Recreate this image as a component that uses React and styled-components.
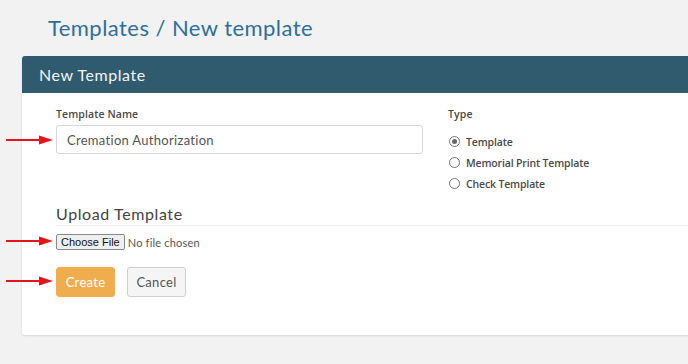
import styled, { createGlobalStyle } from 'styled-components';

const Global = createGlobalStyle`
  html, body {
    margin: 0;
    padding: 0;
    background: #f2f2f2;
    font-family: "Lato", "Noto Sans", sans-serif;
    overflow: hidden;
  }
`;

const Page = styled.div`
  position: relative;
  width: 688px;
  height: 364px;
  padding-left: 22px;
  box-sizing: border-box;
`;

const Title = styled.h1`
  margin: 0;
  padding: 14px 0 0 26px;
  height: 56px;
  box-sizing: border-box;
  font-size: 22px;
  font-weight: 400;
  color: #2f6f9b;
  letter-spacing: 0.45px;
`;

const Card = styled.div`
  background: #fff;
  border-radius: 3px 0 0 3px;
  box-shadow: 0 1px 2px rgba(0, 0, 0, 0.12);
  height: 279px;
  width: 680px;
`;

const CardHeader = styled.div`
  background: #305b6f;
  color: #f2f5f7;
  height: 37px;
  border-radius: 3px 0 0 0;
  padding-left: 17px;
  display: flex;
  align-items: center;
  font-size: 16px;
  letter-spacing: 0.55px;
`;

const Body = styled.div`
  padding: 14px 0 0 34px;
`;

const Row = styled.div`
  display: flex;
`;

const NameCol = styled.div`
  width: 367px;
  margin-right: 25px;
`;

const Label = styled.div`
  font-family: "Open Sans", "Lato", sans-serif;
  font-size: 10.5px;
  font-weight: 600;
  color: #4a4a4a;
  height: 18px;
  letter-spacing: 0.1px;
`;

const TextInput = styled.input`
  box-sizing: border-box;
  width: 367px;
  height: 29px;
  border: 1px solid #d6d6d6;
  border-radius: 3px;
  padding: 0 10px;
  font-family: inherit;
  font-size: 13px;
  color: #555;
  letter-spacing: 0.3px;
  outline: none;
`;

const RadioList = styled.div`
  display: flex;
  flex-direction: column;
  gap: 4px;
  margin-top: 8px;
`;

const RadioRow = styled.label`
  display: flex;
  align-items: center;
  height: 17px;
  font-family: "Open Sans", "Lato", sans-serif;
  font-size: 10.5px;
  font-weight: 600;
  color: #4a4a4a;
  letter-spacing: -0.15px;
`;

const Dot = styled.span`
  width: 9px;
  height: 9px;
  border-radius: 50%;
  border: 1px solid #777;
  margin: 0 6px 0 1px;
  display: inline-flex;
  align-items: center;
  justify-content: center;
  &::after {
    content: '';
    width: 5px;
    height: 5px;
    border-radius: 50%;
    background: ${(p) => (p.checked ? '#666' : 'transparent')};
  }
`;

const Section = styled.div`
  margin-top: 12px;
  font-size: 16px;
  color: #444;
  padding-bottom: 2px;
  border-bottom: 1px solid #eee;
  letter-spacing: 0.6px;
`;

const FileRow = styled.div`
  display: flex;
  align-items: center;
  margin-top: 8px;
  height: 16px;
`;

const FileButton = styled.span`
  box-sizing: border-box;
  height: 16px;
  padding: 0 4px;
  display: inline-flex;
  align-items: center;
  border: 1px solid #8a8a8a;
  border-radius: 2px;
  background: #efefef;
  font-family: "Liberation Sans", Arial, sans-serif;
  font-size: 11px;
  color: #111;
`;

const FileText = styled.span`
  margin-left: 3px;
  font-size: 11px;
  color: #555;
  letter-spacing: 0.2px;
`;

const Buttons = styled.div`
  display: flex;
  gap: 12px;
  margin-top: 17px;
`;

const Button = styled.button`
  height: 30px;
  width: 59px;
  border-radius: 3px;
  font-family: inherit;
  font-size: 13px;
  letter-spacing: 0.3px;
  border: 1px solid ${(p) => (p.primary ? '#f0ad4e' : '#cfcfcf')};
  background: ${(p) => (p.primary ? '#f0ad4e' : '#f5f5f5')};
  color: ${(p) => (p.primary ? '#fff' : '#555')};
  padding: 0;
`;

const Arrow = styled.svg`
  position: absolute;
  left: 5px;
  width: 50px;
  height: 10px;
`;

function RedArrow({ top }) {
  return (
    <Arrow style={{ top }} viewBox="0 0 50 10">
      <line x1="1" y1="5" x2="36" y2="5" stroke="#e8141b" strokeWidth="2.2" />
      <polygon points="34,0.5 48,5 34,9.5" fill="#e8141b" />
    </Arrow>
  );
}

export default function App() {
  return (
    <Page>
      <Global />
      <Title>Templates / New template</Title>
      <Card>
        <CardHeader>New Template</CardHeader>
        <Body>
          <Row>
            <NameCol>
              <Label>Template Name</Label>
              <TextInput defaultValue="Cremation Authorization" />
            </NameCol>
            <div>
              <Label>Type</Label>
              <RadioList>
                <RadioRow><Dot checked />Template</RadioRow>
                <RadioRow><Dot />Memorial Print Template</RadioRow>
                <RadioRow><Dot />Check Template</RadioRow>
              </RadioList>
            </div>
          </Row>
          <Section>Upload Template</Section>
          <FileRow>
            <FileButton>Choose File</FileButton>
            <FileText>No file chosen</FileText>
          </FileRow>
          <Buttons>
            <Button primary>Create</Button>
            <Button>Cancel</Button>
          </Buttons>
        </Body>
      </Card>
      <RedArrow top={135} />
      <RedArrow top={236} />
      <RedArrow top={276} />
    </Page>
  );
}
